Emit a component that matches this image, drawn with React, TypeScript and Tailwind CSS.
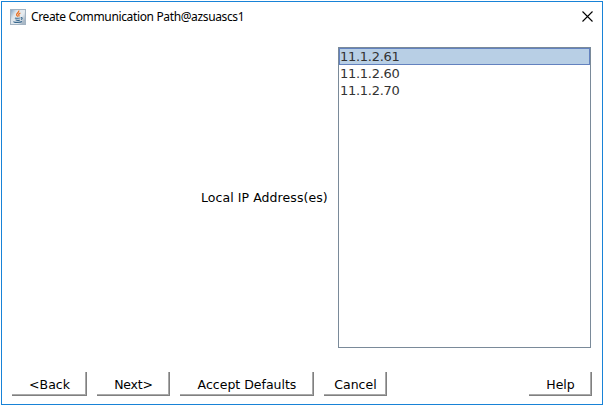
import React from "react";

const addresses = ["11.1.2.61", "11.1.2.60", "11.1.2.70"];

function JavaIcon() {
  return (
    <svg width="16" height="16" viewBox="0 0 16 16" className="block shrink-0">
      <defs>
        <linearGradient id="tile" x1="0" y1="0" x2="1" y2="0.6">
          <stop offset="0" stopColor="#7d9fc0" />
          <stop offset="0.35" stopColor="#dfe6ec" />
          <stop offset="0.75" stopColor="#e6ebef" />
          <stop offset="1" stopColor="#a9b8c6" />
        </linearGradient>
      </defs>
      <rect x="0.5" y="0.5" width="15" height="15" fill="url(#tile)" stroke="#a3b3c2" />
      <path d="M8.8 1.5C9.2 3.5 6.4 4.2 6.6 5.8C6.8 6.6 7.4 7 7.7 7.6M10.4 4C8.8 4.7 8.4 5.3 8.9 6.2C9.2 6.8 8.9 7.2 8.6 7.5" fill="none" stroke="#ea7022" strokeWidth="1.3" />
      <path d="M5 8.8C5.5 9.4 9.5 9.4 10.3 8.9M5.6 10.8C6.5 11.3 9 11.3 9.8 10.9M10.8 8.6C12.8 8.3 12.3 10.2 10.9 10.5M3.8 12.5C3 13.5 10 13.9 12 12.5" fill="none" stroke="#37678d" strokeWidth="1.1" />
    </svg>
  );
}

function Button({ label, className, text = "" }: { label: string; className: string; text?: string }) {
  return (
    <button className={`h-6 shrink-0 border-r border-b border-[#808080] bg-white ${className}`}>
      <span className="flex h-[23px] items-center justify-center border-r border-b border-[#a9a9a9] pt-[2px] pl-[2px]">
        <span className={`text-[12.5px] whitespace-nowrap ${text}`}>{label}</span>
      </span>
    </button>
  );
}

export default function App() {
  return (
    <div className="h-[407px] w-[604px] overflow-hidden bg-white pt-px pl-px">
      <div className="flex h-[404px] w-[602px] flex-col border border-[#1883d7] bg-white font-['DejaVu_Sans',sans-serif] text-[13px] leading-[17px] text-black">
        <header className="flex h-[30px] items-center pr-[9px] pl-2">
          <JavaIcon />
          <h1 className="ml-[5px] font-['Noto_Sans','Open_Sans',sans-serif] text-[12px] leading-4 tracking-[-0.36px] whitespace-nowrap">
            Create Communication Path@azsuascs1
          </h1>
          <button aria-label="Close" className="mt-[-1px] ml-auto">
            <svg width="11" height="11" viewBox="0 0 11 11" className="block">
              <path d="M0.5 0.5L10.5 10.5M10.5 0.5L0.5 10.5" stroke="black" strokeWidth="1.1" />
            </svg>
          </button>
        </header>
        <main className="mt-[15px] flex h-[301px] items-center justify-end pr-[11px]">
          <label className="mr-[10px] w-[127px] text-[12.5px] tracking-[0.07px] whitespace-nowrap">
            Local IP Address(es)
          </label>
          <ul className="h-[301px] w-[253px] border border-[#7a8a99] text-[#333333]">
            {addresses.map((ip, i) => (
              <li
                key={ip}
                className={
                  i === 0
                    ? "flex h-[17px] items-center border border-[#6382bf] bg-[#b8cfe5] tracking-[-0.28px]"
                    : "flex h-[17px] items-center border border-transparent tracking-[-0.28px]"
                }
              >
                {ip}
              </li>
            ))}
          </ul>
        </main>
        <footer className="mt-6 flex gap-[10px] pr-[10px] pl-[10px]">
          <Button label="<Back" className="w-[75px]" />
          <Button label="Next>" className="w-[73px]" text="tracking-[-0.2px]" />
          <Button label="Accept Defaults" className="w-[134px]" />
          <Button label="Cancel" className="w-[63px]" />
          <Button label="Help" className="ml-auto w-[63px]" />
        </footer>
      </div>
    </div>
  );
}
